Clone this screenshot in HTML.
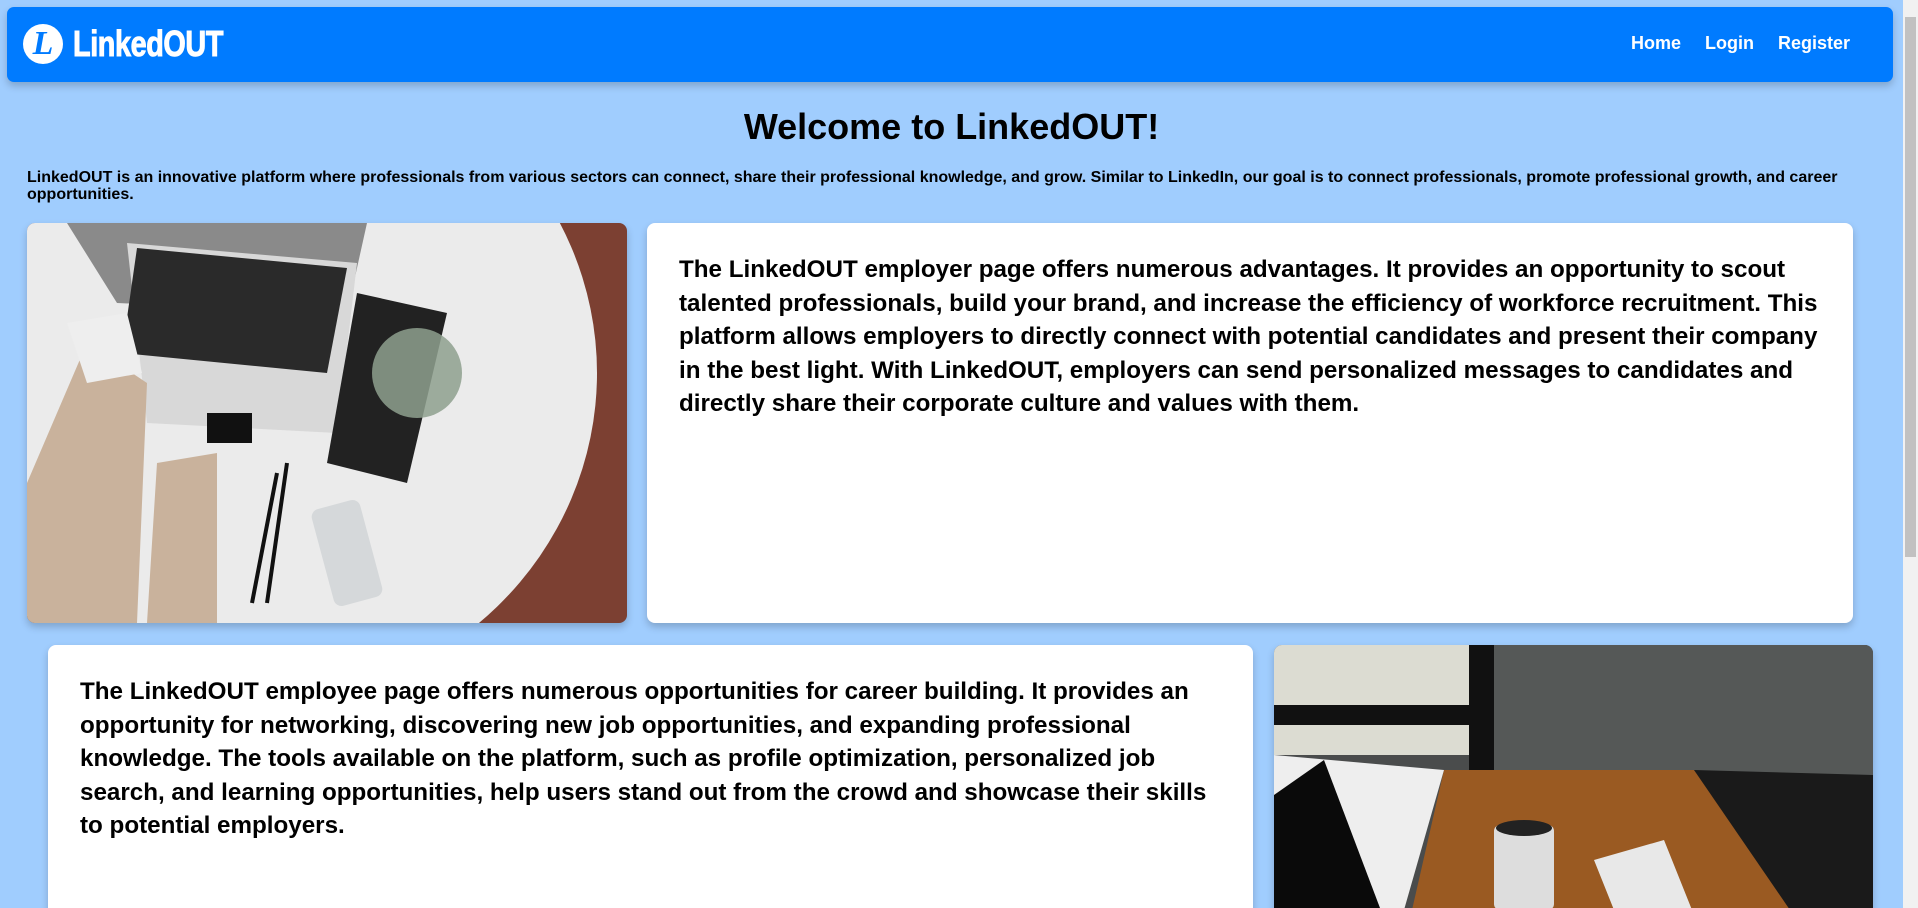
<!DOCTYPE html>
<html><head><meta charset="utf-8">
<style>
*{box-sizing:border-box;margin:0;padding:0}
html,body{width:1918px;height:908px;overflow:hidden}
body{background:#a0cdfe;font-family:"Liberation Sans",Arial,sans-serif;position:relative}
.nav{position:absolute;left:7px;top:7px;width:1886px;height:75px;background:#007bff;border-radius:7px;box-shadow:0 4px 8px rgba(0,0,0,.2)}
.logo{position:absolute;left:16px;top:17px;width:40px;height:40px;border-radius:50%;background:#fff;color:#007bff;font-family:"Liberation Serif",serif;font-style:italic;font-weight:bold;font-size:34px;line-height:40px;text-align:center}
.brand{position:absolute;left:66px;top:16px;color:#fff;font-family:"Liberation Sans Narrow","Liberation Sans",sans-serif;font-weight:bold;font-size:36px;letter-spacing:-0.5px;transform:scaleX(0.8);transform-origin:left;-webkit-text-stroke:1px #fff}
.links{position:absolute;right:43px;top:26px;color:#fff;font-weight:bold;font-size:18px}
.links span{margin-left:24px}
h1{position:absolute;left:0;width:1903px;top:106px;text-align:center;font-size:36px;font-weight:bold;color:#000}
.intro{position:absolute;left:27px;top:169px;width:1860px;font-size:16px;font-weight:bold;line-height:17px;color:#000}
.img1{position:absolute;left:27px;top:223px;width:600px;height:400px;border-radius:8px;overflow:hidden;box-shadow:0 4px 8px rgba(0,0,0,.2);background:#7c4032}
.card{position:absolute;background:#fff;border-radius:8px;box-shadow:0 4px 8px rgba(0,0,0,.2);padding:30px 32px;font-size:24.2px;font-weight:bold;line-height:33.5px;color:#000}
.img2{position:absolute;left:1274px;top:645px;width:599px;height:300px;border-radius:8px;overflow:hidden;box-shadow:0 4px 8px rgba(0,0,0,.2);background:#4a4c4c}
</style></head><body>
<div class="nav">
 <div class="logo">L</div>
 <div class="brand">LinkedOUT</div>
 <div class="links"><span>Home</span><span>Login</span><span>Register</span></div>
</div>
<h1>Welcome to LinkedOUT!</h1>
<div class="intro">LinkedOUT is an innovative platform where professionals from various sectors can connect, share their professional knowledge, and grow. Similar to LinkedIn, our goal is to connect professionals, promote professional growth, and career opportunities.</div>
<div class="img1">
<svg width="600" height="400" viewBox="0 0 600 400">
<ellipse cx="230" cy="150" rx="340" ry="330" fill="#ebebeb"/>
<path d="M40 0 L340 0 L320 90 L90 80 Z" fill="#8a8a8a"/>
<path d="M100 20 L330 40 L310 210 L120 200 Z" fill="#d8d8d8"/>
<path d="M110 25 L320 45 L300 150 L95 130 Z" fill="#2a2a2a"/>
<path d="M0 260 L60 120 L120 160 L110 400 L0 400 Z" fill="#c9b29c"/>
<path d="M130 240 L190 230 L190 400 L120 400 Z" fill="#c9b29c"/>
<path d="M40 100 L100 90 L115 150 L60 160 Z" fill="#eee"/>
<rect x="180" y="190" width="45" height="30" fill="#111"/>
<path d="M330 70 L420 90 L380 260 L300 240 Z" fill="#222"/>
<circle cx="390" cy="150" r="45" fill="#8ea08e" opacity=".85"/>
<rect x="295" y="280" width="50" height="100" rx="8" fill="#d5d8da" transform="rotate(-15 320 330)"/>
<path d="M250 250 L225 380 M260 240 L240 380" stroke="#111" stroke-width="4"/>
</svg>
</div>
<div class="card" style="left:647px;top:223px;width:1206px;height:400px">The LinkedOUT employer page offers numerous advantages. It provides an opportunity to scout talented professionals, build your brand, and increase the efficiency of workforce recruitment. This platform allows employers to directly connect with potential candidates and present their company in the best light. With LinkedOUT, employers can send personalized messages to candidates and directly share their corporate culture and values with them.</div>
<div class="card" style="left:48px;top:645px;width:1205px;height:300px">The LinkedOUT employee page offers numerous opportunities for career building. It provides an opportunity for networking, discovering new job opportunities, and expanding professional knowledge. The tools available on the platform, such as profile optimization, personalized job search, and learning opportunities, help users stand out from the crowd and showcase their skills to potential employers.</div>
<div class="img2">
<svg width="599" height="300" viewBox="0 0 599 300">
<rect x="0" y="0" width="200" height="110" fill="#dcdcd2"/>
<rect x="0" y="60" width="200" height="20" fill="#111"/>
<rect x="195" y="0" width="25" height="130" fill="#111"/>
<rect x="220" y="0" width="379" height="130" fill="#555857"/>
<path d="M170 125 L420 125 L520 263 L560 300 L130 300 Z" fill="#9a5a22"/>
<path d="M0 110 L170 125 L120 300 L0 300 Z" fill="#eee"/>
<path d="M0 150 L50 115 L120 300 L0 300 Z" fill="#0a0a0a"/>
<path d="M420 125 L599 130 L599 300 L540 300 Z" fill="#1a1a1a"/>
<rect x="220" y="180" width="60" height="85" rx="6" fill="#ddd"/>
<ellipse cx="250" cy="183" rx="28" ry="8" fill="#222"/>
<path d="M320 215 L390 195 L420 270 L350 290 Z" fill="#e8e8e8"/>
</svg>
</div>
<div style="position:absolute;left:1903px;top:0;width:15px;height:908px;background:#f1f1f1"><div style="position:absolute;left:2px;top:17px;width:11px;height:540px;background:#c1c1c1"></div></div>
</body></html>
